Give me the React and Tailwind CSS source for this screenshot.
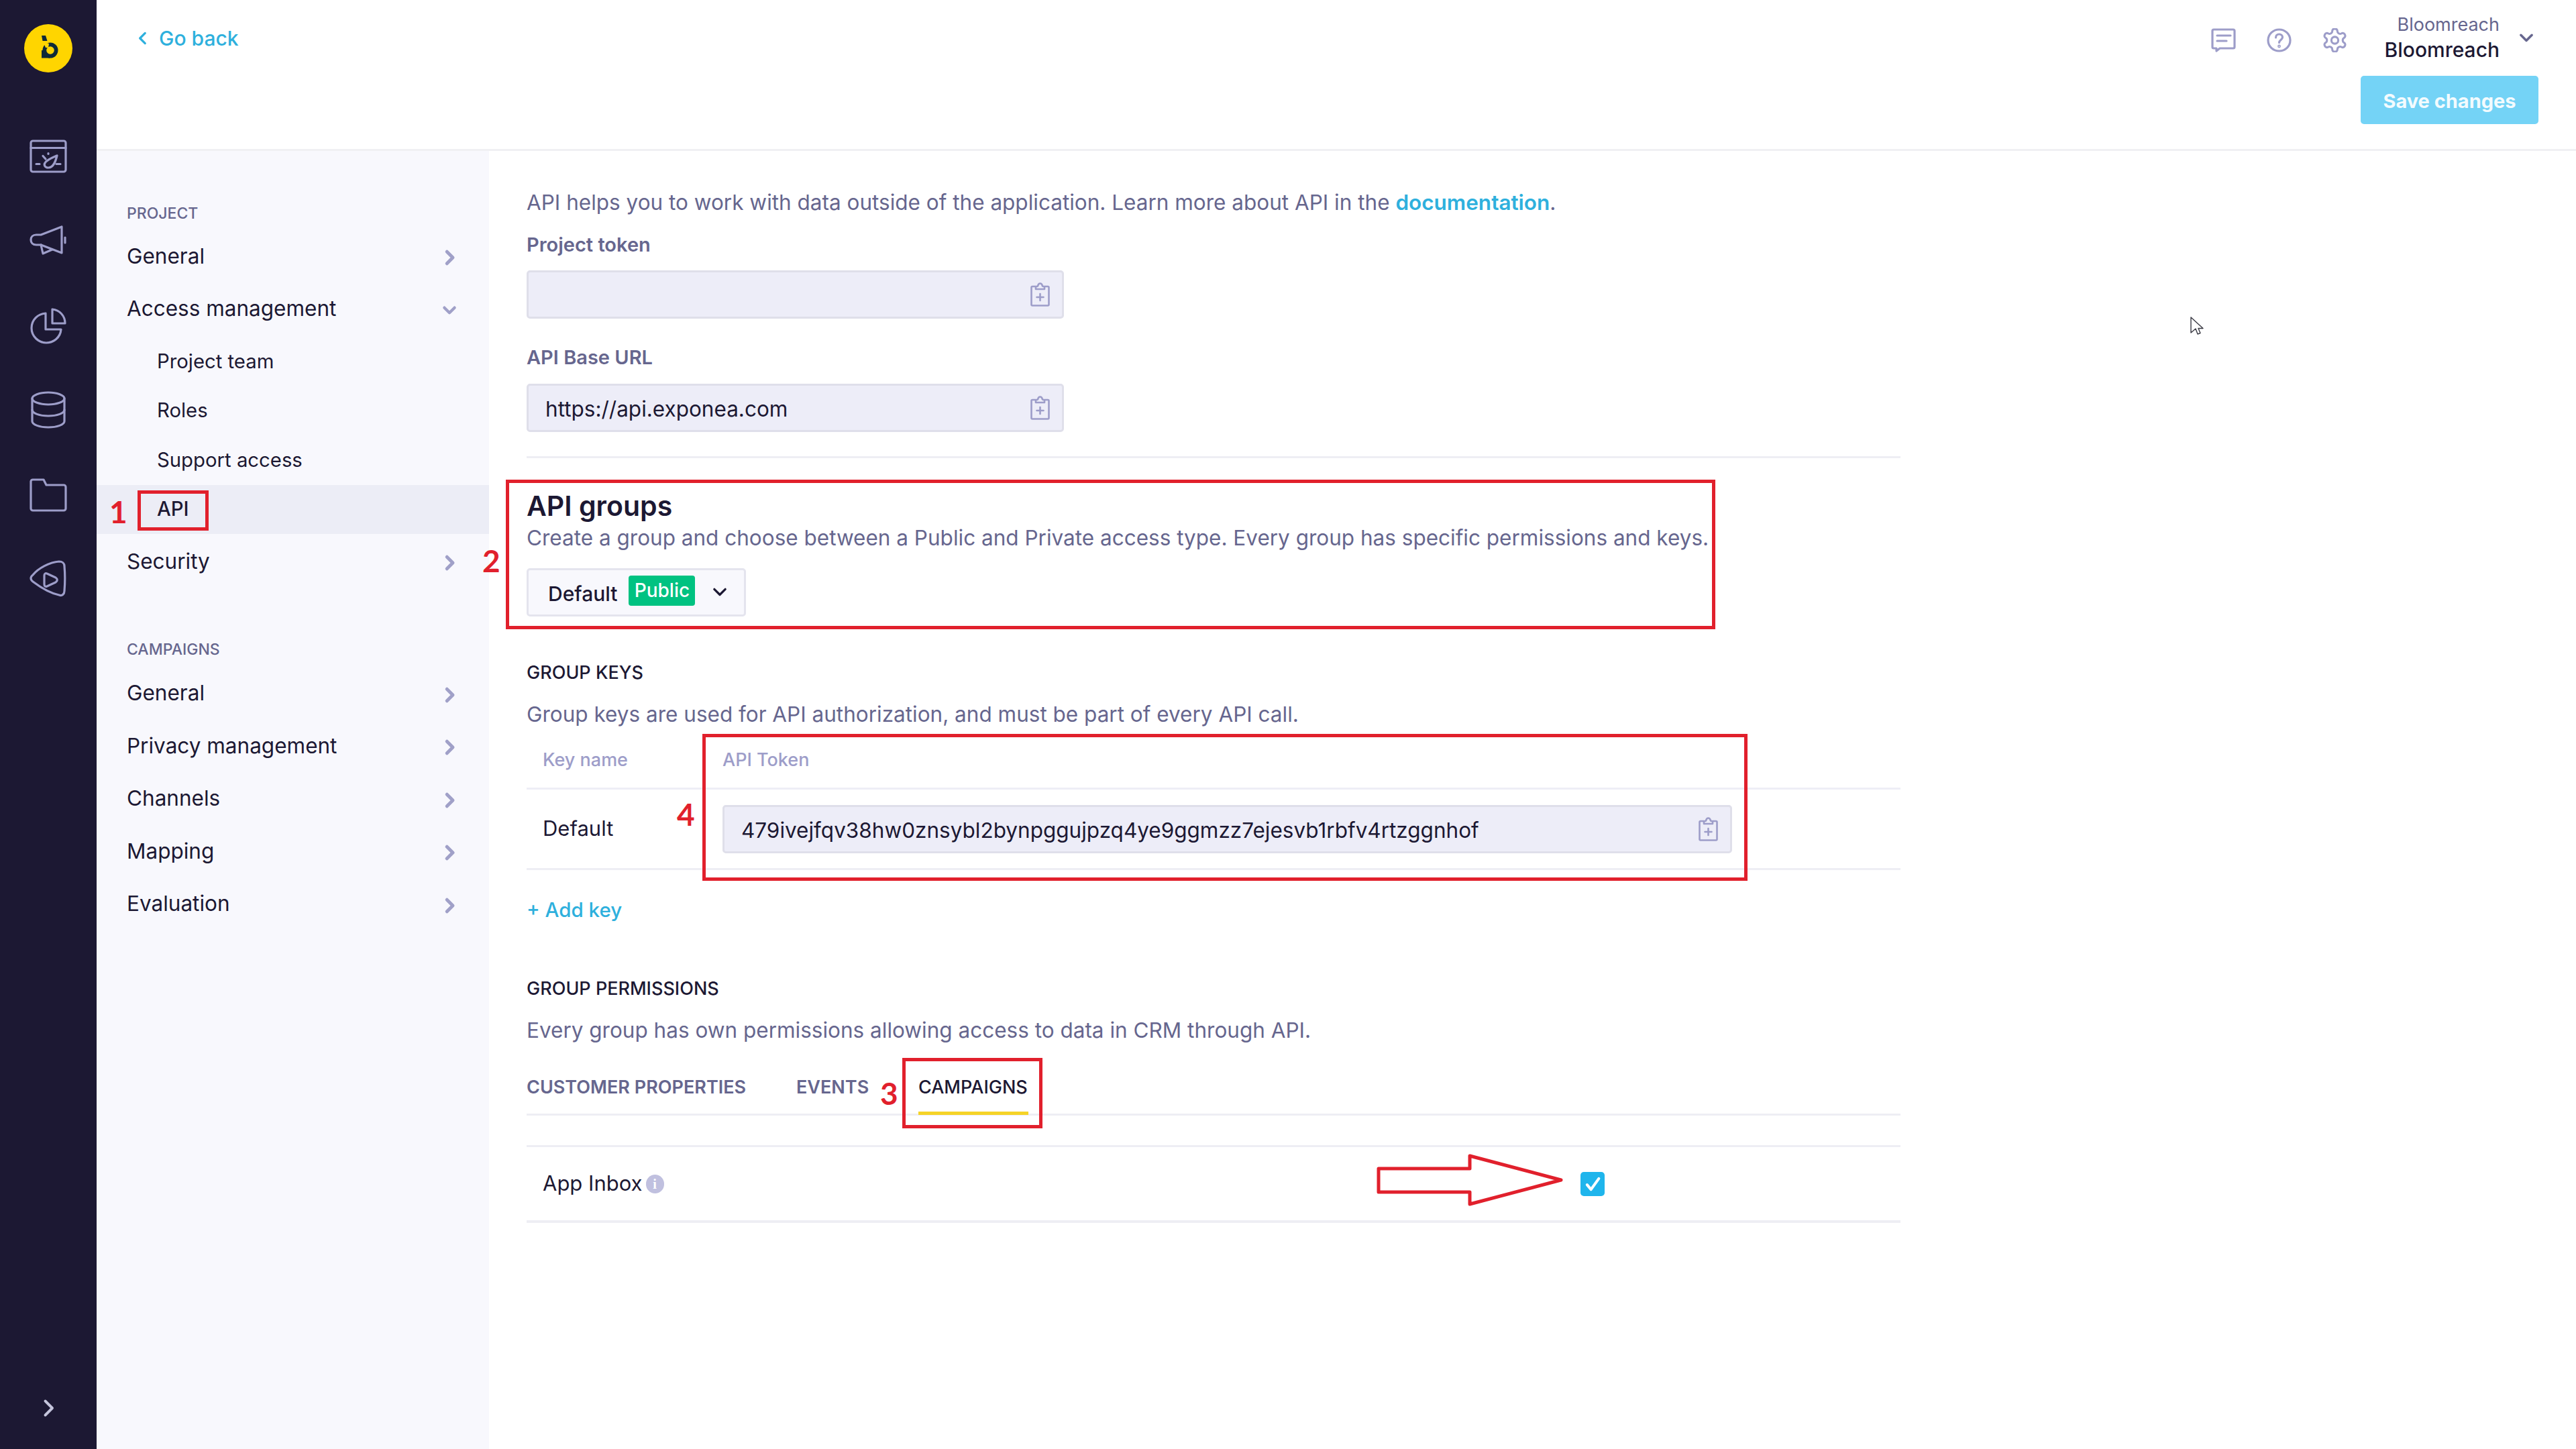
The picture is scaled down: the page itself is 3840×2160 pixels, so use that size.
import React from "react";

const DARK = "text-[#1c1833]";

function Chevron({ dir = "right", className = "", color = "#a0a0c8", w = 4 }) {
  const d = { right: "M9 5l7 7-7 7", down: "M5 8l7 7 7-7", left: "M15 5l-7 7 7 7" }[dir];
  return (
    <svg viewBox="0 0 24 24" fill="none" stroke={color} strokeWidth={w} strokeLinecap="round" strokeLinejoin="round" className={className}>
      <path d={d} />
    </svg>
  );
}

function Clip({ className = "" }) {
  return (
    <svg viewBox="0 0 29 36" fill="none" stroke="#9d9dc9" strokeWidth="2.6" strokeLinejoin="round" strokeLinecap="round" className={className}>
      <path d="M8 6H3a1.500 1.500 0 0 0-1.500 1.500V33A1.500 1.500 0 0 0 3 34.500h23a1.500 1.500 0 0 0 1.500-1.500V7.500A1.500 1.500 0 0 0 26 6h-5" />
      <path d="M8 10V6.500L11 5.500C11.500 3 12.500 1.500 14.500 1.500S17.500 3 18 5.500l3 1V10z" />
      <path d="M14.500 17v10M9.500 22h10" />
    </svg>
  );
}

function NavRow({ label, open }) {
  return (
    <div className={`h-[78.5px] flex items-center justify-between pl-[45px] pr-[50px] text-[31.5px] ${DARK}`}>
      <span>{label}</span>
      {open ? (
        <Chevron dir="down" className="w-[26px] h-[26px] mr-[-4px] relative top-[3px]" />
      ) : (
        <Chevron className="w-[30px] h-[30px] mr-[-6px] relative top-[3px]" />
      )}
    </div>
  );
}

function SubRow({ label, active }) {
  return (
    <div className={`h-[73.5px] flex items-center pl-[90px] text-[29.3px] ${DARK} ${active ? "bg-[#ecedf6] font-medium" : ""}`}>{label}</div>
  );
}

function SectionLabel({ children, className = "" }) {
  return <div className={`h-[38px] flex items-center pl-[45px] text-[23px] font-medium text-[#66668e] ${className}`}>{children}</div>;
}

function ReadOnly({ value, className = "" }) {
  return (
    <div className={`h-[72px] bg-[#ededf8] border-[3px] border-[#dfdfea] rounded-[5px] flex items-center justify-between pl-[25px] pr-[18px] text-[31.5px] ${DARK} ${className}`}>
      <span className="relative top-[2px]">{value}</span>
      <Clip className="w-[29px] h-[36px] shrink-0" />
    </div>
  );
}

const RED = "border-[5px] border-[#e1202c] absolute pointer-events-none";

function Num({ children, className }) {
  return <span className={`absolute font-bold text-[#e1202c] text-[46px] leading-none font-['Lato',sans-serif] ${className}`}>{children}</span>;
}

function Rail() {
  const s = { fill: "none", stroke: "#9d9dc9", strokeWidth: 3.2, strokeLinecap: "round", strokeLinejoin: "round" };
  return (
    <div className="w-[144px] shrink-0 bg-[#1c1833] flex flex-col items-center">
      <div className="mt-[36px] w-[72px] h-[72px] rounded-full bg-[#ffd500]">
        <svg viewBox="0 0 72 72" className="w-[72px] h-[72px]">
          <path d="M26 39h13v11.500H26z" fill="#0f2a38" />
          <circle cx="39" cy="39" r="11.500" fill="#0f2a38" />
          <circle cx="39" cy="39" r="5.800" fill="#ffd500" />
          <path d="M28 26l9 3-1 6-4 0z" fill="#ffd500" />
          <path d="M26 17h6l2.500 8H27.500z" fill="#0f2a38" />
        </svg>
      </div>
      <svg viewBox="0 0 56 50" className="mt-[100px] w-[56px] h-[50px]" {...s}>
        <rect x="2" y="2" width="52" height="46" rx="3" />
        <path d="M2 12.500h52" />
        <path d="M10 36.500h5M40 36.500h6M20 24.500l4 4.500M28 20.500v1" />
        <path d="M41 24C39 32 36 42 28 42C23 42 21 38 23 35C26 30 34 27 41 24z" />
      </svg>
      <svg viewBox="0 0 56 46" className="mt-[77px] w-[56px] h-[46px]" {...s}>
        <path d="M17 15L48 3V42L17 30H10C5 30 2 27 2 22.500S5 15 10 15z" />
        <path d="M17 30L20 43L34 37M53 19v8" />
      </svg>
      <svg viewBox="0 0 54 54" className="mt-[78px] w-[54px] h-[54px]" {...s}>
        <path d="M33 2V23H52C52 12 44 3 33 2z" />
        <path d="M23 8V32H46C45 44 35 52 24 52C12 52 2 42 2 30C2 18 11 9 23 8z" />
      </svg>
      <svg viewBox="0 0 56 56" className="mt-[70px] w-[56px] h-[56px]" {...s}>
        <ellipse cx="28" cy="11" rx="24" ry="9" />
        <path d="M4 11v34c0 5 11 9 24 9s24-4 24-9V11" />
        <path d="M4 28c0 5 11 9 24 9s24-4 24-9" />
      </svg>
      <svg viewBox="0 0 56 50" className="mt-[74px] w-[56px] h-[50px]" {...s}>
        <path d="M2 4.500A3 3 0 0 1 5 2h16l4 8h26a3 3 0 0 1 3 3v32a3 3 0 0 1-3 3H5a3 3 0 0 1-3-3z" />
      </svg>
      <svg viewBox="0 0 56 56" className="mt-[72px] w-[56px] h-[56px]" {...s}>
        <path d="M5 22C13 12 30 3 44 2C49 2 52 5 52 9C53 20 53 34 52 46C52 50 49 54 44 52C30 49 13 38 5 32C1 29 1 25 5 22z" />
        <path d="M22 23c0-3 2-4 4-3l13 6c3 2 3 5 0 7l-13 6c-2 1-4 0-4-3z" />
      </svg>
      <div className="flex-1" />
      <Chevron className="w-[36px] h-[36px] mb-[43px]" color="#c4c4dc" w={2.6} />
    </div>
  );
}

function Header() {
  const s = { fill: "none", stroke: "#9d9dc9", strokeWidth: 3.2, strokeLinecap: "round", strokeLinejoin: "round" };
  return (
    <div className="h-[225px] shrink-0 bg-white border-b-[3px] border-[#f0f0f3] flex justify-between font-['Inter',sans-serif]">
      <div className="pl-[56px] pt-[36px] h-[42px] box-content flex items-center gap-[11px] text-[30px] font-medium text-[#2eb0dd]">
        <Chevron dir="left" className="w-[26px] h-[26px]" color="#2eb0dd" w={3} />
        <span>Go back</span>
      </div>
      <div className="flex flex-col items-end pr-[56px]">
        <div className="flex items-start h-[113px]">
          <div className="flex gap-[46px] pt-[42px] mr-[56px]">
            <svg viewBox="0 0 37 36" className="w-[37px] h-[36px]" {...s}>
              <path d="M4 2h29a2 2 0 0 1 2 2v24a2 2 0 0 1-2 2H13l-5 4v-4H4a2 2 0 0 1-2-2V4a2 2 0 0 1 2-2z" />
              <path d="M9 11h20M9 19h14" />
            </svg>
            <svg viewBox="0 0 37 36" className="w-[37px] h-[36px]" {...s}>
              <ellipse cx="18.500" cy="18" rx="16.500" ry="16" />
              <path d="M13.500 14c0-3 2-5 5-5s5 2 5 4.500c0 4-5 4-5 8" />
              <circle cx="18.500" cy="27" r="0.800" />
            </svg>
            <svg viewBox="2 1.500 20 21" className="w-[37px] h-[36px]" fill="none" stroke="#9d9dc9" strokeWidth="1.8" strokeLinecap="round" strokeLinejoin="round">
              <path d="M12.220 2h-.44a2 2 0 0 0-2 2v.18a2 2 0 0 1-1 1.730l-.43.250a2 2 0 0 1-2 0l-.15-.080a2 2 0 0 0-2.730.730l-.22.380a2 2 0 0 0 .730 2.730l.150.100a2 2 0 0 1 1 1.720v.510a2 2 0 0 1-1 1.740l-.150.090a2 2 0 0 0-.730 2.730l.220.380a2 2 0 0 0 2.730.730l.150-.080a2 2 0 0 1 2 0l.430.250a2 2 0 0 1 1 1.730V20a2 2 0 0 0 2 2h.440a2 2 0 0 0 2-2v-.180a2 2 0 0 1 1-1.730l.430-.250a2 2 0 0 1 2 0l.150.080a2 2 0 0 0 2.730-.730l.220-.390a2 2 0 0 0-.730-2.730l-.150-.080a2 2 0 0 1-1-1.740v-.500a2 2 0 0 1 1-1.740l.150-.090a2 2 0 0 0 .730-2.730l-.220-.380a2 2 0 0 0-2.730-.730l-.150.080a2 2 0 0 1-2 0l-.430-.250a2 2 0 0 1-1-1.730V4a2 2 0 0 0-2-2z" />
              <circle cx="12" cy="12" r="3" />
            </svg>
          </div>
          <div className="flex flex-col items-end pt-[19px]">
            <span className="h-[36px] leading-[36px] text-[27px] text-[#66668e]">Bloomreach</span>
            <span className="h-[38px] leading-[38px] text-[30px] font-medium text-[#1c1833]">Bloomreach</span>
          </div>
          <Chevron dir="down" className="w-[28px] h-[28px] mt-[43px] ml-[26px] mr-[4px]" color="#66668e" w={3} />
        </div>
        <div className="w-[265px] h-[72px] pt-[4px] rounded-[5px] bg-[#74d3f6] flex items-center justify-center text-[29px] font-bold text-[#f3fbfe]">Save changes</div>
      </div>
    </div>
  );
}

function SubNav() {
  return (
    <div className="w-[585px] shrink-0 bg-[#f8f8fd] pt-[74px]">
      <SectionLabel>PROJECT</SectionLabel>
      <div className="mt-[5px]">
        <NavRow label="General" />
        <NavRow label="Access management" open />
      </div>
      <div className="mt-[3px]">
        <SubRow label="Project team" />
        <SubRow label="Roles" />
        <SubRow label="Support access" />
        <SubRow label="API" active />
      </div>
      <div className="mt-[1px]"><NavRow label="Security" /></div>
      <SectionLabel className="mt-[74px]">CAMPAIGNS</SectionLabel>
      <div className="mt-[6px]">
        <NavRow label="General" />
        <NavRow label="Privacy management" />
        <NavRow label="Channels" />
        <NavRow label="Mapping" />
        <NavRow label="Evaluation" />
      </div>
    </div>
  );
}

function Main() {
  const para = "h-[40px] flex items-center text-[31.5px] text-[#66668e]";
  const label = "h-[40px] flex items-center text-[29px] font-semibold text-[#66668e]";
  const head = `h-[40px] flex items-center text-[27px] font-medium ${DARK}`;
  return (
    <div className="flex-1 pl-[56px] pt-[57px] bg-white">
      <div className="w-[2048px]">
        <div className={para}>
          <span>API helps you to work with data outside of the application. Learn more about API in the <span className="text-[#2eb0dd] font-semibold">documentation</span>.</span>
        </div>
        <div className={`${label} mt-[23px]`}>Project token</div>
        <ReadOnly value="" className="w-[801px] mt-[18px]" />
        <div className={`${label} mt-[38px]`}>API Base URL</div>
        <ReadOnly value="https://api.exponea.com" className="w-[801px] mt-[19px]" />
        <div className="h-[3px] bg-[#eeeef4] mt-[36px]" />
        <div className={`h-[48px] flex items-center text-[41px] font-semibold ${DARK} mt-[48px]`}>API groups</div>
        <div className={`${para} mt-[3px]`}>Create a group and choose between a Public and Private access type. Every group has specific permissions and keys.</div>
        <div className="mt-[25px] w-[327px] h-[72px] border-[3px] border-[#e4e4ee] bg-[#f8f8fd] rounded-[5px] flex items-center pl-[29px]">
          <span className={`text-[30px] font-medium ${DARK} relative top-[2px]`}>Default</span>
          <span className="ml-[17px] w-[99px] h-[45px] rounded-[4px] bg-[#00c281] text-white text-[28px] font-medium flex items-center justify-center relative top-[-3px]">Public</span>
          <Chevron dir="down" className="w-[28px] h-[28px] ml-[23px]" color="#1c1833" w={2.8} />
        </div>

        <div className={`${head} mt-[64px]`}>GROUP KEYS</div>
        <div className={`${para} mt-[22px]`}>Group keys are used for API authorization, and must be part of every API call.</div>
        <div className="h-[92px] pt-[8px] flex items-center border-b-[3px] border-[#eeeef6] text-[27px] font-medium text-[#9d9dc9]">
          <div className="w-[268px] pl-[24px]">Key name</div>
          <div className="pl-[24px]">API Token</div>
        </div>
        <div className="h-[120px] flex items-center border-b-[3px] border-[#eeeef4]">
          <div className={`w-[268px] pl-[24px] text-[31px] ${DARK}`}>Default</div>
          <div className="pl-[24px]">
            <ReadOnly value="479ivejfqv38hw0znsybl2bynpggujpzq4ye9ggmzz7ejesvb1rbfv4rtzggnhof" className="w-[1505px]" />
          </div>
        </div>
        <div className="h-[40px] mt-[39px] flex items-center text-[29.5px] font-medium text-[#2eb0dd]">+ Add key</div>

        <div className={`${head} mt-[78px]`}>GROUP PERMISSIONS</div>
        <div className={`${para} mt-[22px]`}>Every group has own permissions allowing access to data in CRM through API.</div>
        <div className="h-[107px] border-b-[3px] border-[#eeeef4] flex items-start pt-[45px] text-[27px] font-semibold text-[#66668e]">
          <span className="h-[40px] flex items-center w-[327px] whitespace-nowrap">CUSTOMER PROPERTIES</span>
          <span className="h-[40px] flex items-center ml-[75px] w-[107px]">EVENTS</span>
          <span className={`h-[61px] ml-[75px] ${DARK} border-b-[5px] border-[#f5d327] w-[164px] font-medium`}>
            <span className="h-[40px] flex items-center">CAMPAIGNS</span>
          </span>
        </div>
        <div className="mt-[44px] h-[116px] border-t-[3px] border-b-[4px] border-[#eeeef4] flex items-center">
          <div className="w-[1571px] pl-[24px] flex items-center">
            <span className={`text-[31px] ${DARK}`}>App Inbox</span>
            <span className="ml-[5px] w-[27px] h-[28px] rounded-full bg-[#c0c0df] text-white text-[20px] font-bold flex items-center justify-center font-['Liberation_Serif',serif]">i</span>
          </div>
          <span className="w-[36px] h-[36px] rounded-[5px] bg-[#1fb5ec] flex items-center justify-center">
            <svg viewBox="0 0 24 24" className="w-[28px] h-[28px]" fill="none" stroke="#fff" strokeWidth="3.5" strokeLinecap="round" strokeLinejoin="round">
              <path d="M5 13l5 6L20 5" />
            </svg>
          </span>
        </div>
      </div>
    </div>
  );
}

function Annotations() {
  return (
    <>
      <div className={`${RED} left-[205px] top-[731px] w-[106px] h-[60px]`} />
      <Num className="left-[163px] top-[740px]">1</Num>
      <div className={`${RED} left-[754px] top-[715px] w-[1803px] h-[223px]`} />
      <Num className="left-[719px] top-[813px]">2</Num>
      <div className={`${RED} left-[1345px] top-[1577px] w-[209px] h-[105px]`} />
      <Num className="left-[1312px] top-[1607px]">3</Num>
      <div className={`${RED} left-[1047px] top-[1094px] w-[1558px] h-[219px]`} />
      <Num className="left-[1009px] top-[1191px]">4</Num>
      <svg viewBox="0 0 280 80" className="absolute left-[2051px] top-[1719px] w-[280px] h-[80px]" fill="none" stroke="#e1202c" strokeWidth="5" strokeLinejoin="round">
        <path d="M4 23H140V4L276 40 140 76V58H4z" />
      </svg>
      <svg viewBox="0 0 22 30" className="absolute left-[3264px] top-[471px] w-[22px] h-[30px]" fill="#fff" stroke="#3a3a44" strokeWidth="1.4" strokeLinejoin="round">
        <path d="M2 2V25L9 19L12 27L16 25.500L13 18.500H20Z" />
      </svg>
    </>
  );
}

export default function App() {
  return (
    <div className="relative w-[3840px] h-[2160px] overflow-hidden flex bg-white font-['Inter',sans-serif]">
      <Rail />
      <div className="flex-1 flex flex-col">
        <Header />
        <div className="flex-1 flex min-h-0">
          <SubNav />
          <Main />
        </div>
      </div>
      <Annotations />
    </div>
  );
}
